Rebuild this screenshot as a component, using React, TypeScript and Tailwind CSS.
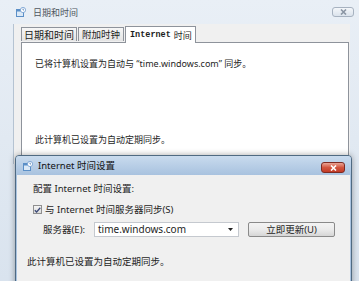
import React from "react";

const ui = { fontFamily: "'Noto Sans', 'Noto Sans CJK SC', sans-serif" };

function ClockIcon() {
  return (
    <svg width="10" height="10" viewBox="0 0 10 10">
      <rect x="0.5" y="2.5" width="7" height="7" fill="#dbe9f7" stroke="#5b8fc7" />
      <rect x="1" y="3" width="6" height="1.5" fill="#5b8fc7" />
      <circle cx="7" cy="3" r="2.6" fill="#ffffff" stroke="#6d9bcf" strokeWidth="0.8" />
      <path d="M7 1.6V3h1" stroke="#3a6ea8" strokeWidth="0.7" fill="none" />
    </svg>
  );
}

function CloseX({ color }: { color: string }) {
  return (
    <svg width="7" height="6" viewBox="0 0 7 6">
      <path d="M1 0.5l5 5M6 0.5l-5 5" stroke={color} strokeWidth="1.6" />
    </svg>
  );
}

export default function App() {
  return (
    <div
      className="relative h-[281px] w-[359px] overflow-hidden bg-gradient-to-b from-[#e9eff6] to-[#d9e3ee] text-[#1e1e1e]"
      style={ui}
    >
      {/* outer window: 日期和时间 */}
      <div className="flex h-[24px] items-center pl-[16px] pr-[5px]">
        <ClockIcon />
        <span className="ml-[7px] text-[9px] leading-none text-[#4f5660]">日期和时间</span>
        <div className="ml-auto flex h-[10px] w-[22px] items-center justify-center rounded-[3px] border border-[#a7b2c0] bg-gradient-to-b from-[#f4f7fa] to-[#dbe3ec]">
          <CloseX color="#8a95a3" />
        </div>
      </div>

      <div className="ml-[13px] mr-[9px] h-[140px] border-l border-[#b5c3d2] bg-[#f0f0f0] pl-[7px] pr-[1px]">
        <div className="flex h-[18px] items-end">
          <div className="mb-[1px] flex h-[14px] w-[56px] items-center justify-center border border-b-0 border-[#8e939b] bg-gradient-to-b from-[#f6f6f6] to-[#e4e4e4] text-[10px] leading-none">
            日期和时间
          </div>
          <div className="mb-[1px] ml-[1px] flex h-[14px] w-[46px] items-center justify-center border border-b-0 border-[#8e939b] bg-gradient-to-b from-[#f6f6f6] to-[#e4e4e4] text-[9.5px] leading-none">
            附加时钟
          </div>
          <div className="relative z-10 -mb-[1px] ml-[1px] flex h-[17px] w-[71px] items-center whitespace-nowrap border border-b-0 border-[#8e939b] bg-white pl-[4px] text-[9px] leading-none">
            <span
              className="text-[8.5px] font-bold"
              style={{ fontFamily: "'Liberation Mono', 'Noto Sans CJK SC', monospace" }}
            >
              Internet
            </span>
            <span className="ml-[3px]">时间</span>
          </div>
        </div>
        <div className="h-[130px] border border-[#8e939b] bg-white pl-[13px] pt-[15px] text-[9px] leading-[12px]">
          <div>已将计算机设置为自动与 “time.windows.com” 同步。</div>
          <div className="mt-[64px]">此计算机已设置为自动定期同步。</div>
        </div>
      </div>

      {/* dialog: Internet 时间设置 */}
      <div className="absolute left-[15px] top-[155px] h-[140px] w-[337px] rounded-t-[4px] border border-[#4f6a82] bg-[#a9c3e0] shadow-[0_0_6px_rgba(0,0,0,0.35)]">
        <div className="flex h-[19px] items-center rounded-t-[3px] bg-gradient-to-b from-[#c9dbee] to-[#a8c2df] pl-[7px] pr-[6px]">
          <ClockIcon />
          <span className="ml-[5px] text-[9.5px] leading-none text-[#111]">Internet 时间设置</span>
          <div className="ml-auto mt-[6px] flex h-[11px] w-[24px] items-center justify-center self-start rounded-[3px] border border-[#7d2a22] bg-gradient-to-b from-[#e9a395] via-[#d2553f] to-[#c23a25]">
            <CloseX color="#ffffff" />
          </div>
        </div>
        <div className="mx-[1px] h-[120px] bg-[#f0f0f0] text-[9.5px] leading-[13px]">
          <div className="ml-[16px] pt-[7px]">配置 Internet 时间设置:</div>
          <div className="ml-[16px] mt-[8px] flex h-[13px] items-center">
            <div className="flex h-[9px] w-[9px] items-center justify-center border border-[#8f8f8f] bg-gradient-to-b from-[#f4f4f4] to-[#dcdcdc]">
              <svg width="7" height="6" viewBox="0 0 7 6">
                <path d="M0.8 3.2l1.8 1.8L6.3 0.8" stroke="#3c4a78" strokeWidth="1.3" fill="none" />
              </svg>
            </div>
            <span className="ml-[3px]">与 Internet 时间服务器同步(S)</span>
          </div>
          <div className="mt-[6px] flex h-[15px] items-center">
            <span className="ml-[26px] w-[51px]">服务器(E):</span>
            <div className="flex h-[15px] w-[145px] items-center border border-[#c5c9cf] bg-white pl-[3px] pr-[5px]">
              <span className="text-[10px]">time.windows.com</span>
              <svg className="ml-auto" width="5" height="3" viewBox="0 0 5 3">
                <path d="M0 0h5L2.5 3z" fill="#222" />
              </svg>
            </div>
            <div className="ml-[9px] flex h-[15px] w-[87px] items-center justify-center rounded-[2px] border border-[#8a8a8a] bg-gradient-to-b from-[#f4f4f4] via-[#ebebeb] to-[#d6d6d6]">
              立即更新(U)
            </div>
          </div>
          <div className="ml-[10px] mt-[18px]">此计算机已设置为自动定期同步。</div>
        </div>
      </div>
    </div>
  );
}
